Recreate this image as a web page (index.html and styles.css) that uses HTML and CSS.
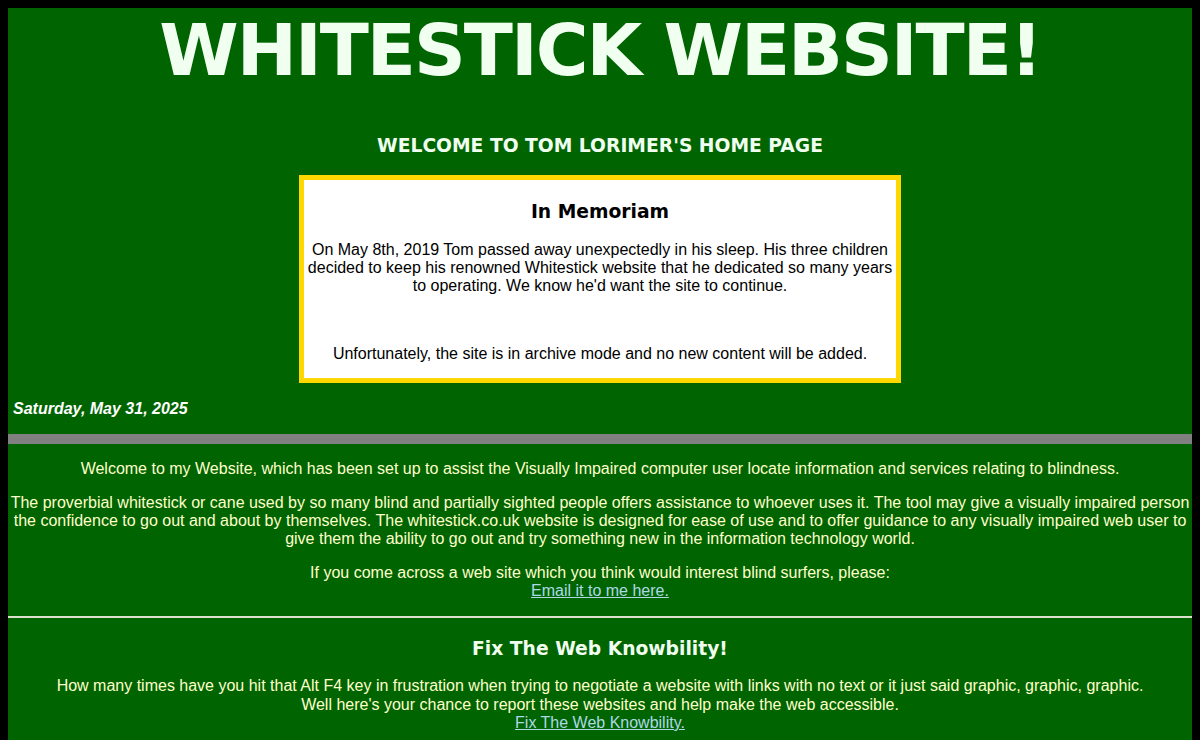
FILE: index.html
```html
<!DOCTYPE html>
<html lang="en">
<head>
<meta charset="utf-8">
<title>Whitestick Website</title>
<link rel="stylesheet" href="styles.css">
</head>
<body>
<div class="page">
  <h1 class="title">WHITESTICK WEBSITE!</h1>
  <h2 class="welcome">WELCOME TO TOM LORIMER'S HOME PAGE</h2>
  <div class="memoriam">
    <h3 class="mem-title">In Memoriam</h3>
    <p class="mem-text">On May 8th, 2019 Tom passed away unexpectedly in his sleep. His three children decided to keep his renowned Whitestick website that he dedicated so many years to operating. We know he'd want the site to continue.</p>
    <p class="mem-text mem-last">Unfortunately, the site is in archive mode and no new content will be added.</p>
  </div>
  <p class="date">Saturday, May 31, 2025</p>
  <div class="bar"></div>
  <div class="content">
    <p class="first">Welcome to my Website, which has been set up to assist the Visually Impaired computer user locate information and services relating to blindness.</p>
    <p>The proverbial whitestick or cane used by so many blind and partially sighted people offers assistance to whoever uses it. The tool may give a visually impaired person the confidence to go out and about by themselves. The whitestick.co.uk website is designed for ease of use and to offer guidance to any visually impaired web user to give them the ability to go out and try something new in the information technology world.</p>
    <p>If you come across a web site which you think would interest blind surfers, please:<br><a href="#">Email it to me here.</a></p>
  </div>
  <hr class="rule">
  <div class="content">
    <h3 class="section-title">Fix The Web Knowbility!</h3>
    <p class="section-text">How many times have you hit that Alt F4 key in frustration when trying to negotiate a website with links with no text or it just said graphic, graphic, graphic.<br>Well here's your chance to report these websites and help make the web accessible.<br><a href="#">Fix The Web Knowbility.</a></p>
  </div>
</div>
</body>
</html>
```
FILE: styles.css
```css
html, body {
  background: #000;
}
body {
  margin: 8px;
  font-family: "Liberation Sans", Arial, sans-serif;
  font-size: 16px;
}
.page {
  background: #006400;
  min-height: 740px;
  overflow: hidden;
}
.title {
  margin: 0;
  text-align: center;
  font-family: "DejaVu Sans", Verdana, sans-serif;
  font-weight: bold;
  font-size: 72px;
  line-height: 84px;
  letter-spacing: -2px;
  color: #f0fff0;
}
.welcome {
  margin: 43px 0 18px;
  text-align: center;
  font-family: "DejaVu Sans", Verdana, sans-serif;
  font-weight: bold;
  font-size: 18.72px;
  line-height: 22px;
  color: #f0fff0;
}
.memoriam {
  width: 50%;
  margin: 0 auto;
  background: #fff;
  border: 5px solid #ffd700;
  padding: 21px 0 15px;
  text-align: center;
  color: #000;
}
.mem-title {
  margin: 0 0 18px;
  font-family: "DejaVu Sans", Verdana, sans-serif;
  font-weight: bold;
  font-size: 18.72px;
  line-height: 22px;
}
.mem-text {
  margin: 0;
  line-height: 18px;
}
.mem-last {
  margin-top: 50px;
}
.date {
  margin: 17px 0 16px;
  padding-left: 5px;
  font-weight: bold;
  font-style: italic;
  line-height: 18px;
  color: #fff;
}
.bar {
  height: 10px;
  background: #808080;
}
.content {
  text-align: center;
  color: #ffffcc;
  padding: 0 2px;
}
.content p {
  margin: 16px 0 0;
  line-height: 18px;
}
.content p.first {
  margin-top: 16px;
}
.content a {
  color: #add8e6;
  text-decoration: underline;
}
.rule {
  margin: 16px 0 0;
  border: 0;
  height: 2px;
  background: #e0e0d0;
}
.section-title {
  margin: 20px 0 0;
  font-family: "DejaVu Sans", Verdana, sans-serif;
  font-weight: bold;
  font-size: 18.72px;
  line-height: 22px;
  color: #f0fff0;
}
.content p.section-text {
  margin-top: 17px;
  line-height: 18.5px;
}
```
